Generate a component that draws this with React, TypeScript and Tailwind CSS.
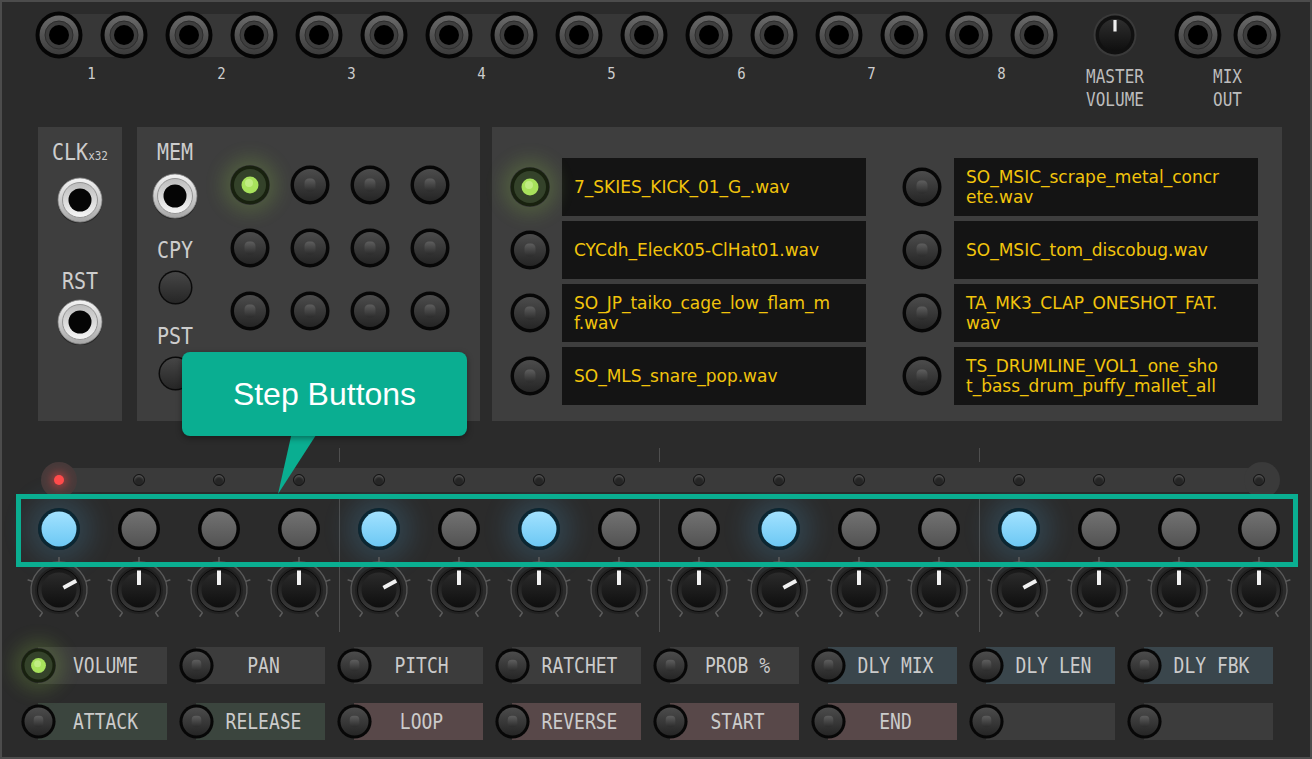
import React from 'react';
import clsx from 'clsx';

const pairs = ['1', '2', '3', '4', '5', '6', '7', '8'];

const samplesLeft = [
  ['7_SKIES_KICK_01_G_.wav'],
  ['CYCdh_ElecK05-ClHat01.wav'],
  ['SO_JP_taiko_cage_low_flam_m', 'f.wav'],
  ['SO_MLS_snare_pop.wav'],
];
const samplesRight = [
  ['SO_MSIC_scrape_metal_concr', 'ete.wav'],
  ['SO_MSIC_tom_discobug.wav'],
  ['TA_MK3_CLAP_ONESHOT_FAT.', 'wav'],
  ['TS_DRUMLINE_VOL1_one_sho', 't_bass_drum_puffy_mallet_all'],
];

const activeSteps = [0, 4, 6, 9, 12];
const turnedKnobs = [0, 4, 9, 12];

const tones: Record<string, string> = {
  grey: 'bg-[#3c3c3c]',
  blue: 'bg-[#3a464c]',
  green: 'bg-[#3b453e]',
  red: 'bg-[#584849]',
};

const paramRows: [string, string][][] = [
  [['VOLUME', 'grey'], ['PAN', 'grey'], ['PITCH', 'grey'], ['RATCHET', 'grey'], ['PROB %', 'grey'], ['DLY MIX', 'blue'], ['DLY LEN', 'blue'], ['DLY FBK', 'blue']],
  [['ATTACK', 'green'], ['RELEASE', 'green'], ['LOOP', 'red'], ['REVERSE', 'red'], ['START', 'red'], ['END', 'red'], ['', 'grey'], ['', 'grey']],
];

// the panel font is a tall, narrow mono
const tall = 'inline-block scale-y-[1.18]';

function Jack() {
  return (
    <svg width="48" height="48" viewBox="0 0 48 48" className="block">
      <defs>
        <linearGradient id="jackRing" x1="0" y1="0" x2="0" y2="1">
          <stop offset="0" stopColor="#6a6a6a" />
          <stop offset="1" stopColor="#3b3b3b" />
        </linearGradient>
      </defs>
      <circle cx="24" cy="24" r="23.5" fill="#050505" />
      <circle cx="24" cy="24" r="19.5" fill="url(#jackRing)" />
      <circle cx="24" cy="24" r="14" fill="#3e3e3e" stroke="#2c2c2c" strokeWidth="1" />
      <circle cx="24" cy="24" r="10" fill="#000" />
    </svg>
  );
}

function SilverJack() {
  return (
    <svg width="46" height="46" viewBox="0 0 46 46" className="block">
      <defs>
        <linearGradient id="silverOuter" x1="0" y1="0" x2="0" y2="1">
          <stop offset="0" stopColor="#f4f4f4" />
          <stop offset="1" stopColor="#a6a6a6" />
        </linearGradient>
        <linearGradient id="silverInner" x1="0" y1="0" x2="0" y2="1">
          <stop offset="0" stopColor="#bcbcbc" />
          <stop offset="1" stopColor="#f6f6f6" />
        </linearGradient>
      </defs>
      <circle cx="23" cy="24" r="22.5" fill="#1c1c1c" opacity="0.6" />
      <circle cx="23" cy="23" r="22" fill="url(#silverOuter)" stroke="#8c8c8c" strokeWidth="0.8" />
      <circle cx="23" cy="23" r="17.5" fill="url(#silverInner)" stroke="#959595" strokeWidth="1" />
      <circle cx="23" cy="23" r="11.5" fill="#050505" />
    </svg>
  );
}

function LedButton({ size = 40, lit = false }: { size?: number; lit?: boolean }) {
  return (
    <div className={clsx('relative z-10 shrink-0 rounded-full', lit && 'shadow-[0_0_18px_8px_rgba(150,210,70,0.2)]')}>
      <svg width={size} height={size} viewBox="0 0 40 40" className="block">
        <defs>
          <linearGradient id="btnFace" x1="0" y1="0" x2="0" y2="1">
            <stop offset="0" stopColor="#4c4c4c" />
            <stop offset="1" stopColor="#252525" />
          </linearGradient>
          <linearGradient id="btnLed" x1="0" y1="0" x2="0" y2="1">
            <stop offset="0" stopColor="#5e5e5e" />
            <stop offset="1" stopColor="#2c2c2c" />
          </linearGradient>
        </defs>
        <circle cx="20" cy="20" r="19.5" fill={lit ? '#18210f' : '#070707'} />
        {lit ? (
          <>
            <circle cx="20" cy="20" r="16" fill="#34422a" />
            <circle cx="20" cy="20" r="8.5" fill="#a8e25c" />
            <circle cx="19" cy="18" r="4" fill="#d2f59c" opacity="0.6" />
          </>
        ) : (
          <>
            <circle cx="20" cy="20" r="16" fill="url(#btnFace)" />
            <rect x="14.5" y="13.5" width="11" height="13" rx="4.5" fill="url(#btnLed)" />
          </>
        )}
      </svg>
    </div>
  );
}

function PlainButton() {
  return (
    <svg width="35" height="35" viewBox="0 0 35 35" className="block">
      <defs>
        <linearGradient id="plainFace" x1="0" y1="0" x2="0" y2="1">
          <stop offset="0" stopColor="#464646" />
          <stop offset="1" stopColor="#262626" />
        </linearGradient>
      </defs>
      <circle cx="17.5" cy="17.5" r="17" fill="#0a0a0a" />
      <circle cx="17.5" cy="17.5" r="15.5" fill="url(#plainFace)" />
    </svg>
  );
}

function StepButton({ active }: { active: boolean }) {
  return (
    <div className={clsx('rounded-full', active && 'shadow-[0_0_24px_12px_rgba(80,170,225,0.18)]')}>
      <svg width="42" height="42" viewBox="0 0 42 42" className="block">
        <defs>
          <linearGradient id="stepOff" x1="0" y1="0" x2="0" y2="1">
            <stop offset="0" stopColor="#727272" />
            <stop offset="1" stopColor="#535353" />
          </linearGradient>
          <linearGradient id="stepOn" x1="0" y1="0" x2="0" y2="1">
            <stop offset="0" stopColor="#a2e2ff" />
            <stop offset="1" stopColor="#6cc8f4" />
          </linearGradient>
        </defs>
        <circle cx="21" cy="21" r="21" fill={active ? '#0b2733' : '#040404'} />
        <circle cx="21" cy="21" r="17.5" fill={active ? 'url(#stepOn)' : 'url(#stepOff)'} />
      </svg>
    </div>
  );
}

function polar(r: number, a: number, c = 34) {
  const rad = (a * Math.PI) / 180;
  return [c + r * Math.sin(rad), c - r * Math.cos(rad)];
}

function Knob({ angle }: { angle: number }) {
  const [sx, sy] = polar(28, -144);
  const [ex, ey] = polar(28, 144);
  const [px1, py1] = polar(5, angle);
  const [px2, py2] = polar(19.5, angle);
  return (
    <svg width="68" height="68" viewBox="0 0 68 68" className="block">
      <defs>
        <linearGradient id="knobBody" x1="0" y1="0" x2="0" y2="1">
          <stop offset="0" stopColor="#171717" />
          <stop offset="1" stopColor="#3a3a3a" />
        </linearGradient>
        <linearGradient id="knobFace" x1="0" y1="0" x2="0" y2="1">
          <stop offset="0" stopColor="#2b2b2b" />
          <stop offset="1" stopColor="#0e0e0e" />
        </linearGradient>
      </defs>
      <path d={`M ${sx} ${sy} A 28 28 0 1 1 ${ex} ${ey}`} fill="none" stroke="#595959" strokeWidth="1.3" />
      {[-144, -72, 0, 72, 144].map(t => {
        const [x1, y1] = polar(28, t);
        const [x2, y2] = polar(33, t);
        return <line key={t} x1={x1} y1={y1} x2={x2} y2={y2} stroke="#5e5e5e" strokeWidth="1.5" />;
      })}
      <circle cx="34" cy="34" r="24" fill="#1f1f1f" opacity="0.8" />
      <circle cx="34" cy="34" r="21.5" fill="url(#knobBody)" stroke="#0a0a0a" strokeWidth="1" />
      <circle cx="34" cy="34" r="17.5" fill="url(#knobFace)" />
      <line x1={px1} y1={py1} x2={px2} y2={py2} stroke="#f2f2f2" strokeWidth="4" />
    </svg>
  );
}

function MasterKnob() {
  return (
    <svg width="44" height="44" viewBox="0 0 44 44" className="block">
      <defs>
        <linearGradient id="masterFace" x1="0" y1="0" x2="0" y2="1">
          <stop offset="0" stopColor="#2e2e2e" />
          <stop offset="1" stopColor="#0f0f0f" />
        </linearGradient>
      </defs>
      <circle cx="22" cy="22" r="21.5" fill="#3a3a3a" />
      <circle cx="22" cy="22" r="19.5" fill="#101010" />
      <circle cx="22" cy="22" r="16" fill="url(#masterFace)" />
      <line x1="22" y1="7" x2="22" y2="18.5" stroke="#f0f0f0" strokeWidth="3.2" />
    </svg>
  );
}

function StepRow({ className, cell, render }: { className: string; cell: string; render: (i: number) => React.ReactNode }) {
  return (
    <div className={clsx('flex pl-[17px]', className)}>
      {[0, 1, 2, 3].map(g => (
        <div key={g} className={clsx('flex h-full', g > 0 && 'shadow-[inset_1px_0_0_#4e4e4e]')}>
          {[0, 1, 2, 3].map(k => (
            <div key={k} className={clsx('flex w-[80px] justify-center', cell)}>
              {render(g * 4 + k)}
            </div>
          ))}
        </div>
      ))}
    </div>
  );
}

function SampleColumn({ items, litFirst }: { items: string[][]; litFirst?: boolean }) {
  return (
    <div className="flex flex-col gap-[5px]">
      {items.map((lines, i) => (
        <div key={i} className="flex items-center gap-[12px]">
          <LedButton lit={litFirst && i === 0} />
          <div className="flex h-[58px] w-[304px] flex-col justify-center overflow-hidden bg-[#141414] pl-[12px] font-['DejaVu_Sans',sans-serif] text-[17px] leading-[20px] text-[#f2c40c] whitespace-nowrap">
            {lines.map(l => (
              <span key={l}>{l}</span>
            ))}
          </div>
        </div>
      ))}
    </div>
  );
}

export default function App() {
  return (
    <div className="relative h-[759px] w-[1312px] overflow-hidden border-2 border-[#4c4c4c] bg-[#2b2b2b] font-['DejaVu_Sans_Mono',monospace] text-[#cdcdcd]">
      {/* jacks */}
      <div className="flex h-[125px] pl-[33px] pt-[9px]">
        <div className="flex gap-[17px]">
          {pairs.map(n => (
            <div key={n} className="flex flex-col items-center">
              <div className="relative flex gap-[17px]">
                <div className="absolute left-[24px] right-[24px] top-[3px] bottom-[2px] bg-[#373737]" />
                <div className="relative"><Jack /></div>
                <div className="relative"><Jack /></div>
              </div>
              <span className={clsx('mt-[5px] text-[14px] leading-[18px]', tall)}>{n}</span>
            </div>
          ))}
        </div>
        <div className="ml-[22px] flex w-[70px] flex-col items-center">
          <div className="flex h-[48px] items-center"><MasterKnob /></div>
          <div className="mt-[6px] flex flex-col items-center text-[16px] leading-[23px] text-[#bdbdbd]">
            <span className={tall}>MASTER</span>
            <span className={tall}>VOLUME</span>
          </div>
        </div>
        <div className="ml-[24px] flex flex-col items-center">
          <div className="relative flex gap-[11px]">
            <div className="absolute left-[24px] right-[24px] top-[3px] bottom-[2px] bg-[#373737]" />
            <div className="relative"><Jack /></div>
            <div className="relative"><Jack /></div>
          </div>
          <div className="mt-[6px] flex flex-col items-center text-[16px] leading-[23px] text-[#bdbdbd]">
            <span className={tall}>MIX</span>
            <span className={tall}>OUT</span>
          </div>
        </div>
      </div>

      {/* panels */}
      <div className="flex h-[294px] pl-[36px]">
        <div className="flex w-[84px] flex-col items-center bg-[#3e3e3e] pt-[13px]">
          <div className={clsx('text-[20px] leading-[24px]', tall)}>CLK<span className="text-[11px]">x32</span></div>
          <div className="mt-[9px]"><SilverJack /></div>
          <div className={clsx('mt-[46px] text-[20px] leading-[24px]', tall)}>RST</div>
          <div className="mt-[6px]"><SilverJack /></div>
        </div>

        <div className="ml-[15px] flex w-[343px] bg-[#3e3e3e]">
          <div className="flex w-[76px] flex-col items-center pt-[13px]">
            <div className={clsx('text-[20px] leading-[24px]', tall)}>MEM</div>
            <div className="mt-[9px]"><SilverJack /></div>
            <div className={clsx('mt-[19px] text-[20px] leading-[24px]', tall)}>CPY</div>
            <div className="mt-[8px]"><PlainButton /></div>
            <div className={clsx('mt-[19px] text-[20px] leading-[24px]', tall)}>PST</div>
            <div className="mt-[8px]"><PlainButton /></div>
          </div>
          <div className="ml-[17px] grid h-fit grid-cols-4 gap-x-[20px] gap-y-[23px] pt-[38px]">
            {Array.from({ length: 12 }).map((_, i) => (
              <LedButton key={i} lit={i === 0} />
            ))}
          </div>
        </div>

        <div className="ml-[12px] flex w-[790px] gap-[36px] bg-[#3e3e3e] pl-[18px] pt-[31px]">
          <SampleColumn items={samplesLeft} litFirst />
          <SampleColumn items={samplesRight} />
        </div>
      </div>

      {/* steps */}
      <div className="h-[27px]" />
      <StepRow className="h-[14px]" cell="" render={() => null} />
      <div className="relative h-[36px]">
        <div className="absolute left-[57px] top-[6px] h-[24px] w-[1203px] bg-[#3a3a3a]" />
        <div className="absolute left-[39px] top-0 h-[36px] w-[36px] rounded-full bg-[#473a3a]" />
        <div className="absolute left-[1242px] top-0 h-[36px] w-[36px] rounded-full bg-[#3a3a3a]" />
        <div className="relative flex h-full pl-[17px]">
          {Array.from({ length: 16 }).map((_, i) => (
            <div key={i} className="flex w-[80px] items-center justify-center">
              {i === 0 ? (
                <div className="h-[10px] w-[10px] rounded-full bg-[#ff4b4b] shadow-[0_0_8px_3px_rgba(255,70,70,0.45)]" />
              ) : (
                <div className="h-[12px] w-[12px] rounded-full border border-[#141414] bg-[#262626] shadow-[inset_0_2px_2px_rgba(255,255,255,0.2)]" />
              )}
            </div>
          ))}
        </div>
      </div>
      <StepRow
        className="h-[58px]"
        cell="items-start pt-[10px]"
        render={i => <StepButton active={activeSteps.includes(i)} />}
      />
      <StepRow
        className="h-[76px]"
        cell="items-start"
        render={i => <Knob angle={turnedKnobs.includes(i) ? 62 : 0} />}
      />

      {/* parameter buttons */}
      <div className="mt-[15px] flex flex-col gap-[19px] pl-[19px]">
        {paramRows.map((row, r) => (
          <div key={r} className="flex gap-[12px]">
            {row.map(([label, tone], i) => (
              <div key={i} className="flex h-[37px] w-[146px] items-center">
                <LedButton size={35} lit={r === 0 && i === 0} />
                <div className={clsx('-ml-[18px] flex h-full flex-1 items-center justify-center pl-[22px] pr-[16px] text-[18px] text-[#cbcbcb]', tones[tone])}>
                  <span className={tall}>{label}</span>
                </div>
              </div>
            ))}
          </div>
        ))}
      </div>

      {/* annotation */}
      <div className="absolute left-[14px] top-[492px] h-[73px] w-[1282px] border-[5px] border-[#0aae91]" />
      <svg width="48" height="64" viewBox="0 0 48 64" className="absolute left-[274px] top-[430px]">
        <polygon points="16,0 42,0 2,62" fill="#0aae91" />
      </svg>
      <div className="absolute left-[180px] top-[350px] flex h-[84px] w-[285px] items-center justify-center rounded-[8px] bg-[#0aae91] font-['Liberation_Sans',Arial,sans-serif] text-[32px] text-white shadow-[0_2px_6px_rgba(0,0,0,0.4)]">
        Step Buttons
      </div>
    </div>
  );
}
